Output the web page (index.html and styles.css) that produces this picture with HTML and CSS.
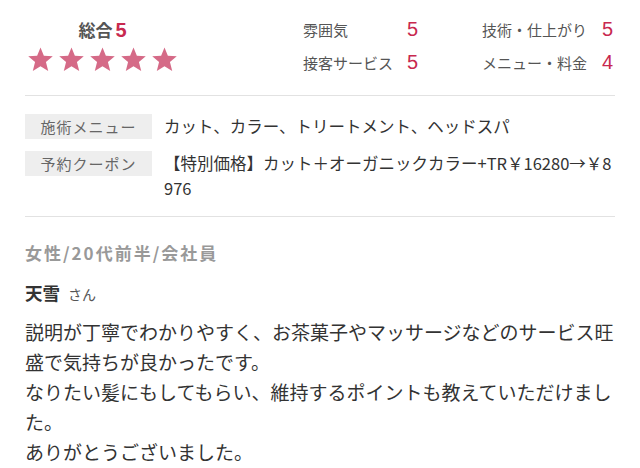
FILE: index.html
```html
<!DOCTYPE html>
<html lang="ja">
<head>
    <meta charset="UTF-8">
    <meta name="viewport" content="width=device-width, initial-scale=1.0">
    <title>口コミ</title>
    <link rel="stylesheet" href="styles.css">
</head>
<body>
    <svg width="0" height="0" class="defs">
        <symbol id="star" viewBox="0 0 24 23">
            <polygon points="12,0.5 15.1,8 23.3,8.6 17,13.9 19.1,22 12,17.6 4.9,22 7,13.9 0.7,8.6 8.9,8"/>
        </symbol>
    </svg>

    <div class="review">
        <div class="summary">
            <div class="total">
                <div class="total-title">総合<span class="score">5</span></div>
                <div class="stars">
                    <svg class="star"><use href="#star"/></svg>
                    <svg class="star"><use href="#star"/></svg>
                    <svg class="star"><use href="#star"/></svg>
                    <svg class="star"><use href="#star"/></svg>
                    <svg class="star"><use href="#star"/></svg>
                </div>
            </div>
            <div class="ratings">
                <div class="rating"><span>雰囲気</span><span class="score">5</span></div>
                <div class="rating"><span>技術・仕上がり</span><span class="score">5</span></div>
                <div class="rating"><span>接客サービス</span><span class="score">5</span></div>
                <div class="rating"><span>メニュー・料金</span><span class="score">4</span></div>
            </div>
        </div>

        <div class="details">
            <div class="detail-row">
                <div class="detail-label">施術メニュー</div>
                <div class="detail-value">カット、カラー、トリートメント、ヘッドスパ</div>
            </div>
            <div class="detail-row">
                <div class="detail-label">予約クーポン</div>
                <div class="detail-value coupon">【特別価格】カット＋オーガニックカラー+TR￥16280→￥8976</div>
            </div>
        </div>

        <div class="reviewer">
            <div class="reviewer-meta">女性/20代前半/会社員</div>
            <div class="reviewer-name">天雪<span class="honorific">さん</span></div>
            <p class="comment">説明が丁寧でわかりやすく、お茶菓子やマッサージなどのサービス旺盛で気持ちが良かったです。<br>なりたい髪にもしてもらい、維持するポイントも教えていただけました。<br>ありがとうございました。</p>
        </div>
    </div>
</body>
</html>
```

FILE: styles.css
```css
:root {
    --text-color: #333;
    --label-color: #555;
    --muted-color: #999;
    --score-color: #c8294f;
    --star-color: #d56a87;
    --line-color: #e2e2e2;
    --label-bg: #eeeeee;
}

* {
    margin: 0;
    padding: 0;
    box-sizing: border-box;
}

body {
    background-color: #fff;
    color: var(--text-color);
    font-family: "Noto Sans CJK JP", "Noto Sans", sans-serif;
}

.defs {
    position: absolute;
}

.review {
    padding: 0 25px;
}

/* Ratings summary */
.summary {
    display: flex;
    justify-content: space-between;
    padding: 13px 2px 16px 2px;
    border-bottom: 1px solid var(--line-color);
}

.total {
    display: flex;
    flex-direction: column;
    align-items: center;
    padding-top: 5px;
}

.total-title {
    font-size: 17px;
    font-weight: 700;
    line-height: 24px;
    color: var(--label-color);
}

.total-title .score {
    margin-left: 3px;
}

.score {
    font-family: "Liberation Sans", Arial, sans-serif;
    font-size: 20px;
    color: var(--score-color);
}

.stars {
    display: flex;
    gap: 4px;
    margin-top: 5px;
}

.star {
    width: 27px;
    height: 25px;
    fill: var(--star-color);
}

.ratings {
    display: grid;
    grid-template-columns: 115px 131px;
    grid-auto-rows: 33px;
    column-gap: 64px;
}

.rating {
    display: flex;
    justify-content: space-between;
    align-items: center;
    font-size: 15px;
    color: var(--label-color);
}

/* Menu / coupon */
.details {
    display: flex;
    flex-direction: column;
    gap: 12px;
    padding: 18px 0 15px;
    border-bottom: 1px solid var(--line-color);
}

.detail-row {
    display: flex;
    align-items: flex-start;
    gap: 12px;
}

.detail-label {
    flex: 0 0 127px;
    height: 25px;
    line-height: 25px;
    text-align: center;
    font-size: 15px;
    letter-spacing: 1px;
    color: #666;
    background-color: var(--label-bg);
}

.detail-value {
    flex: 1;
    font-size: 16.5px;
    line-height: 25px;
    color: var(--text-color);
}

.coupon {
    word-break: break-all;
}

/* Reviewer */
.reviewer {
    padding-top: 23px;
}

.reviewer-meta {
    font-size: 17px;
    font-weight: 700;
    line-height: 26px;
    letter-spacing: 2px;
    color: var(--muted-color);
}

.reviewer-name {
    margin-top: 14px;
    font-size: 17.5px;
    font-weight: 700;
    line-height: 26px;
    color: var(--text-color);
}

.honorific {
    margin-left: 8px;
    font-size: 14px;
    font-weight: 400;
    color: var(--label-color);
}

.comment {
    margin-top: 10px;
    font-size: 19px;
    line-height: 30px;
    color: var(--text-color);
}
```
